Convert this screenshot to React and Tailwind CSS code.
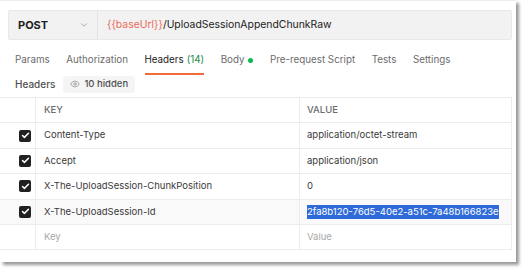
import { ChevronDown, Eye, Check } from "lucide-react";

const tabs = [
  { label: "Params" },
  { label: "Authorization" },
  { label: "Headers", count: "(14)", active: true },
  { label: "Body", dot: true },
  { label: "Pre-request Script" },
  { label: "Tests" },
  { label: "Settings" },
];

const rows = [
  { key: "Content-Type", value: "application/octet-stream" },
  { key: "Accept", value: "application/json" },
  { key: "X-The-UploadSession-ChunkPosition", value: "0" },
  {
    key: "X-The-UploadSession-Id",
    value: "2fa8b120-76d5-40e2-a51c-7a48b166823e",
    selected: true,
  },
];

const HeaderRow = ({ row }) => (
  <div
    className={`flex h-[25.4px] border-b border-[#ececec] ${
      row.selected ? "bg-[#f9f9f9]" : ""
    }`}
  >
    <div className="w-[36px] flex items-center justify-end pr-[4px] border-r border-[#ececec]">
      <span className="w-[12px] h-[12px] rounded-[2px] bg-[#212121] flex items-center justify-center">
        <Check className="w-[9px] h-[9px] text-white" strokeWidth={4} />
      </span>
    </div>
    <div className="w-[264px] flex items-center pl-[8px] border-r border-[#ececec] text-[#3a3a3a]">
      {row.key}
    </div>
    <div className="flex-1 flex items-center pl-[7px] text-[#3a3a3a]">
      {row.selected ? (
        <span className="bg-[#2f6bd8] text-white leading-[14px]">{row.value}</span>
      ) : (
        row.value
      )}
    </div>
  </div>
);

export default function App() {
  return (
    <div className="w-[528px] h-[272px] bg-white font-['Inter','Liberation_Sans',sans-serif] text-[9.5px]">
      <div className="w-[516px] h-[262px] bg-white border-t border-[#eeeeee] shadow-[3px_3px_3px_rgba(0,0,0,0.4)] flex flex-col">
        {/* url bar */}
        <div className="mt-[9px] ml-[8px] mr-[4px] h-[30px] bg-[#f2f2f2] border border-[#e8e8e8] rounded-[2px] flex items-center">
          <div className="w-[89px] h-full flex items-center justify-between pl-[9px] pr-[8px] border-r border-[#e2e2e2]">
            <span className="font-bold text-[11px] text-[#212121]">POST</span>
            <ChevronDown className="w-[10px] h-[10px] text-[#9a9a9a]" />
          </div>
          <div className="pl-[9px] text-[10.4px] text-[#212121]">
            <span className="text-[#eb6a5a]">{"{{baseUrl}}"}</span>/UploadSessionAppendChunkRaw
          </div>
        </div>

        {/* tabs */}
        <div className="flex items-end h-[35px] pl-[15px] gap-[16.5px] text-[9.8px] text-[#6b6b6b]">
          {tabs.map((t) => (
            <div
              key={t.label}
              className={`flex items-center pb-[5px] border-b-2 ${
                t.active ? "border-[#f26b3a] text-[#212121]" : "border-transparent"
              }`}
            >
              {t.label}
              {t.count && <span className="ml-[3px] text-[#1b8a4a]">{t.count}</span>}
              {t.dot && <span className="ml-[4px] w-[5px] h-[5px] rounded-full bg-[#0cbb52]" />}
            </div>
          ))}
        </div>

        {/* headers sub bar */}
        <div className="flex items-center h-[22px] pb-[4px] pl-[15px] gap-[8px]">
          <span className="text-[#505050] font-medium text-[10px]">Headers</span>
          <span className="flex items-center gap-[4px] h-[17px] px-[7px] rounded-[4px] bg-[#f5f5f5] text-[#505050] font-medium">
            <Eye className="w-[10px] h-[10px] text-[#9a9a9a]" />
            10 hidden
          </span>
        </div>

        {/* table */}
        <div className="mr-[4px] border-t border-r border-[#ececec]">
          <div className="flex h-[25.4px] border-b border-[#ececec] text-[#6b6b6b] font-medium">
            <div className="w-[36px] border-r border-[#ececec]" />
            <div className="w-[264px] flex items-center pl-[8px] border-r border-[#ececec]">KEY</div>
            <div className="flex-1 flex items-center pl-[7px]">VALUE</div>
          </div>
          {rows.map((r) => (
            <HeaderRow key={r.key} row={r} />
          ))}
          <div className="flex h-[25.4px] border-b border-[#ececec] text-[#a8a8a8]">
            <div className="w-[36px] border-r border-[#ececec]" />
            <div className="w-[264px] flex items-center pl-[8px] border-r border-[#ececec]">Key</div>
            <div className="flex-1 flex items-center pl-[7px]">Value</div>
          </div>
        </div>
      </div>
    </div>
  );
}
